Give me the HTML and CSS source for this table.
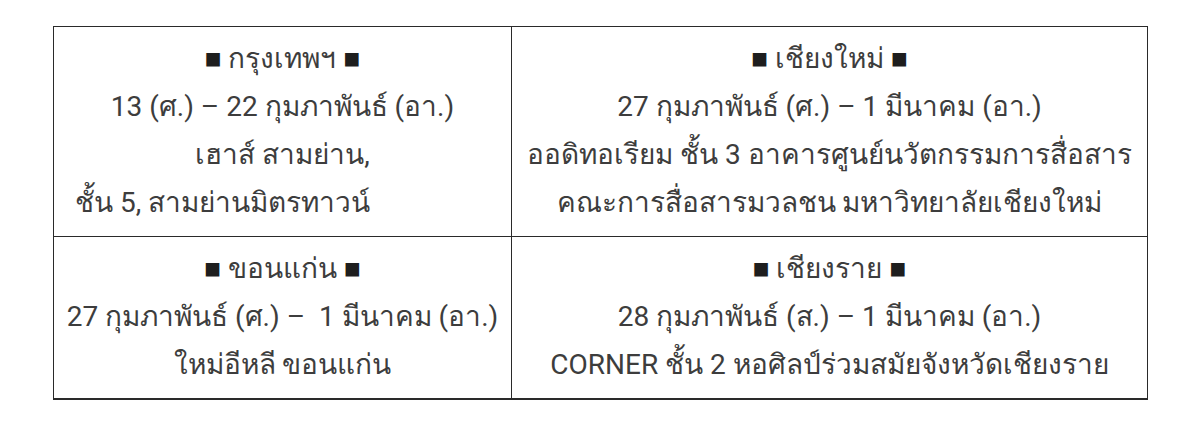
FILE: index.html
```html
<!DOCTYPE html>
<html lang="th">
<head>
<meta charset="utf-8">
<link rel="stylesheet" href="styles.css">
</head>
<body>
<table class="venues">
  <tr>
    <td class="cell cell-left">
      <p class="line"><span class="sq">■</span> กรุงเทพฯ <span class="sq">■</span></p>
      <p class="line">13 (ศ.) – 22 กุมภาพันธ์ (อา.)</p>
      <p class="line">เฮาส์ สามย่าน,</p>
      <p class="line line-left">ชั้น 5, สามย่านมิตรทาวน์</p>
    </td>
    <td class="cell cell-right">
      <p class="line"><span class="sq">■</span> เชียงใหม่ <span class="sq">■</span></p>
      <p class="line">27 กุมภาพันธ์ (ศ.) – 1 มีนาคม (อา.)</p>
      <p class="line">ออดิทอเรียม ชั้น 3 อาคารศูนย์นวัตกรรมการสื่อสาร</p>
      <p class="line">คณะการสื่อสารมวลชน มหาวิทยาลัยเชียงใหม่</p>
    </td>
  </tr>
  <tr>
    <td class="cell cell-left">
      <p class="line"><span class="sq">■</span> ขอนแก่น <span class="sq">■</span></p>
      <p class="line">27 กุมภาพันธ์ (ศ.) –&nbsp; 1 มีนาคม (อา.)</p>
      <p class="line">ใหม่อีหลี ขอนแก่น</p>
    </td>
    <td class="cell cell-right">
      <p class="line"><span class="sq">■</span> เชียงราย <span class="sq">■</span></p>
      <p class="line">28 กุมภาพันธ์ (ส.) – 1 มีนาคม (อา.)</p>
      <p class="line">CORNER ชั้น 2 หอศิลป์ร่วมสมัยจังหวัดเชียงราย</p>
    </td>
  </tr>
</table>
</body>
</html>
```
FILE: styles.css
```css
html, body {
  margin: 0;
  padding: 0;
  background: #ffffff;
}
body {
  padding: 26px 52px 0 53px;
  font-family: "Roboto", "Noto Sans", sans-serif;
  color: #3d3d3d;
}
.venues {
  width: 1095px;
  border-collapse: collapse;
  border: 1px solid #2a2a2a;
  border-bottom-width: 2px;
}
.cell {
  border: 1px solid #2a2a2a;
  padding: 8px 6px 9px;
  text-align: center;
  vertical-align: top;
}
.cell-left {
  width: 445px;
}
.line {
  margin: 0;
  font-size: 28px;
  line-height: 48px;
  white-space: nowrap;
}
.line-left {
  text-align: left;
  padding-left: 15px;
}
.sq {
  color: #1e1e1e;
}
```
